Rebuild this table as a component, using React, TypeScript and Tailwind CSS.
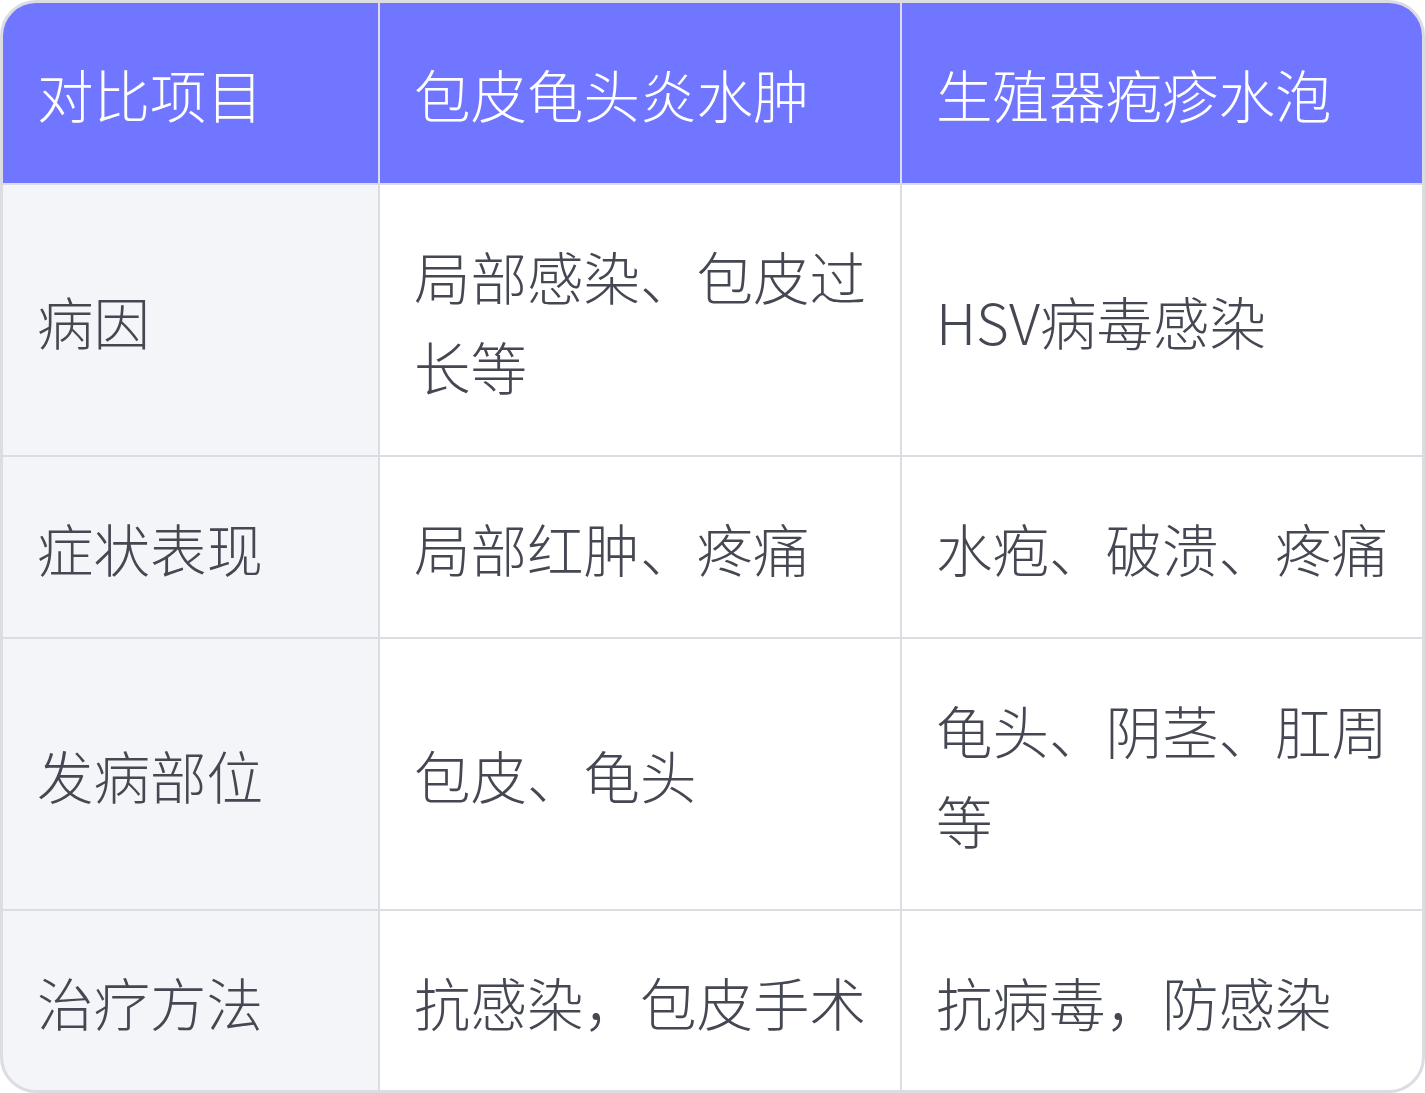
import { FC } from "react";

const headers = ["对比项目", "包皮龟头炎水肿", "生殖器疱疹水泡"];

const rows: string[][] = [
    ["病因", "局部感染、包皮过长等", "HSV病毒感染"],
    ["症状表现", "局部红肿、疼痛", "水疱、破溃、疼痛"],
    ["发病部位", "包皮、龟头", "龟头、阴茎、肛周等"],
    ["治疗方法", "抗感染，包皮手术", "抗病毒，防感染"],
];

const cell = "flex items-center pl-[34px] pr-[24px] py-[45px] text-[56.5px] leading-[90px]";

const App: FC = () => {
    return (
        <div
            className="w-[1425px] h-[1093px] border-[3px] border-[#dcdde3] rounded-[36px] overflow-hidden bg-[#dcdde3] font-light"
            style={{ fontFamily: '"Noto Sans CJK SC", "Noto Sans", sans-serif' }}
        >
            <div className="grid grid-cols-[375px_520px_1fr] gap-[2px] h-full">
                {headers.map((h) => (
                    <div key={h} className={`${cell} bg-[#7076ff] text-white`}>
                        {h}
                    </div>
                ))}
                {rows.map((row) =>
                    row.map((text, i) => (
                        <div
                            key={row[0] + i}
                            className={`${cell} text-[#454852] ${i === 0 ? "bg-[#f4f5f9]" : "bg-white"}`}
                        >
                            <span>{text}</span>
                        </div>
                    ))
                )}
            </div>
        </div>
    );
};

export default App;
